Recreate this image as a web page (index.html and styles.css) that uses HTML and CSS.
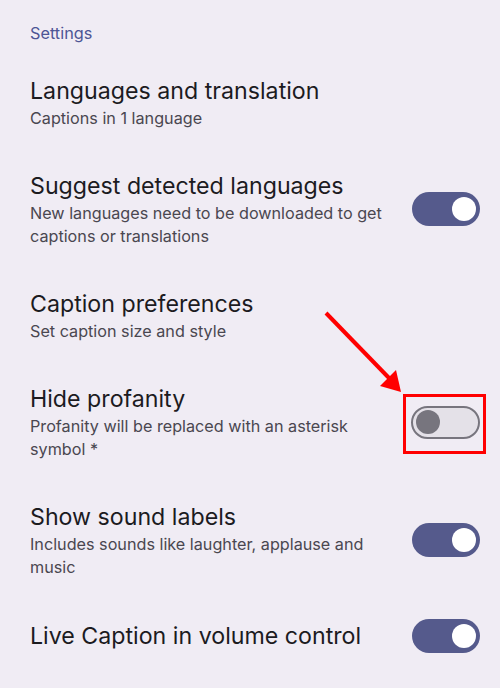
FILE: index.html
```html
<!DOCTYPE html>
<html>
<head>
<meta charset="utf-8">
<link rel="stylesheet" href="styles.css">
</head>
<body>
<div class="screen">
  <div class="header">Settings</div>
  <div class="row">
    <div class="text">
      <div class="title">Languages and translation</div>
      <div class="sub">Captions in 1 language</div>
    </div>
  </div>
  <div class="row">
    <div class="text">
      <div class="title">Suggest detected languages</div>
      <div class="sub">New languages need to be downloaded to get captions or translations</div>
    </div>
    <div class="switch on"><span class="knob"></span></div>
  </div>
  <div class="row">
    <div class="text">
      <div class="title">Caption preferences</div>
      <div class="sub">Set caption size and style</div>
    </div>
  </div>
  <div class="row">
    <div class="text">
      <div class="title">Hide profanity</div>
      <div class="sub">Profanity will be replaced with an asterisk symbol *</div>
    </div>
    <div class="switch off"><span class="knob"></span><span class="highlight"></span></div>
  </div>
  <div class="row">
    <div class="text">
      <div class="title">Show sound labels</div>
      <div class="sub">Includes sounds like laughter, applause and music</div>
    </div>
    <div class="switch on"><span class="knob"></span></div>
  </div>
  <div class="row">
    <div class="text">
      <div class="title">Live Caption in volume control</div>
    </div>
    <div class="switch on"><span class="knob"></span></div>
  </div>
  <svg class="arrow" width="90" height="90" viewBox="0 0 90 90">
    <line x1="3" y1="3" x2="66" y2="68" stroke="#ff0000" stroke-width="4"/>
    <polygon points="78,82 57,76 73,60" fill="#ff0000"/>
  </svg>
</div>
</body>
</html>
```
FILE: styles.css
```css
html, body {
  margin: 0;
  padding: 0;
  background: #f0ecf4;
}
.screen {
  position: relative;
  width: 500px;
  height: 688px;
  overflow: hidden;
  background: #f0ecf4;
  font-family: Inter, Roboto, sans-serif;
}
.header {
  padding: 21px 30px 10px;
  font-size: 16.3px;
  line-height: 24px;
  color: #4d5594;
}
.row {
  display: flex;
  align-items: center;
  padding: 20px 20px 20px 30px;
  gap: 16px;
}
.text {
  flex: 1;
  max-width: 362px;
}
.title {
  font-size: 23.2px;
  line-height: 32px;
  color: #1c1b1f;
}
.sub {
  font-size: 16.2px;
  line-height: 23px;
  color: #4a4750;
}
.switch {
  position: relative;
  margin-left: auto;
  box-sizing: border-box;
  width: 68px;
  height: 34px;
  border-radius: 17px;
  flex: none;
}
.switch.on {
  background: #555a8c;
}
.switch.on .knob {
  position: absolute;
  right: 4px;
  top: 5px;
  width: 24px;
  height: 24px;
  border-radius: 50%;
  background: #ffffff;
}
.switch.off {
  width: 69px;
  height: 33px;
  background: #e4e1e8;
  border: 2px solid #77757e;
}
.switch.off .knob {
  position: absolute;
  left: 3px;
  top: 2.5px;
  width: 24px;
  height: 24px;
  border-radius: 50%;
  background: #77757e;
}
.highlight {
  position: absolute;
  left: -10px;
  top: -14px;
  width: 83px;
  height: 60px;
  box-sizing: border-box;
  border: 3px solid #ff0000;
}
.arrow {
  position: absolute;
  left: 323px;
  top: 310px;
}
```
